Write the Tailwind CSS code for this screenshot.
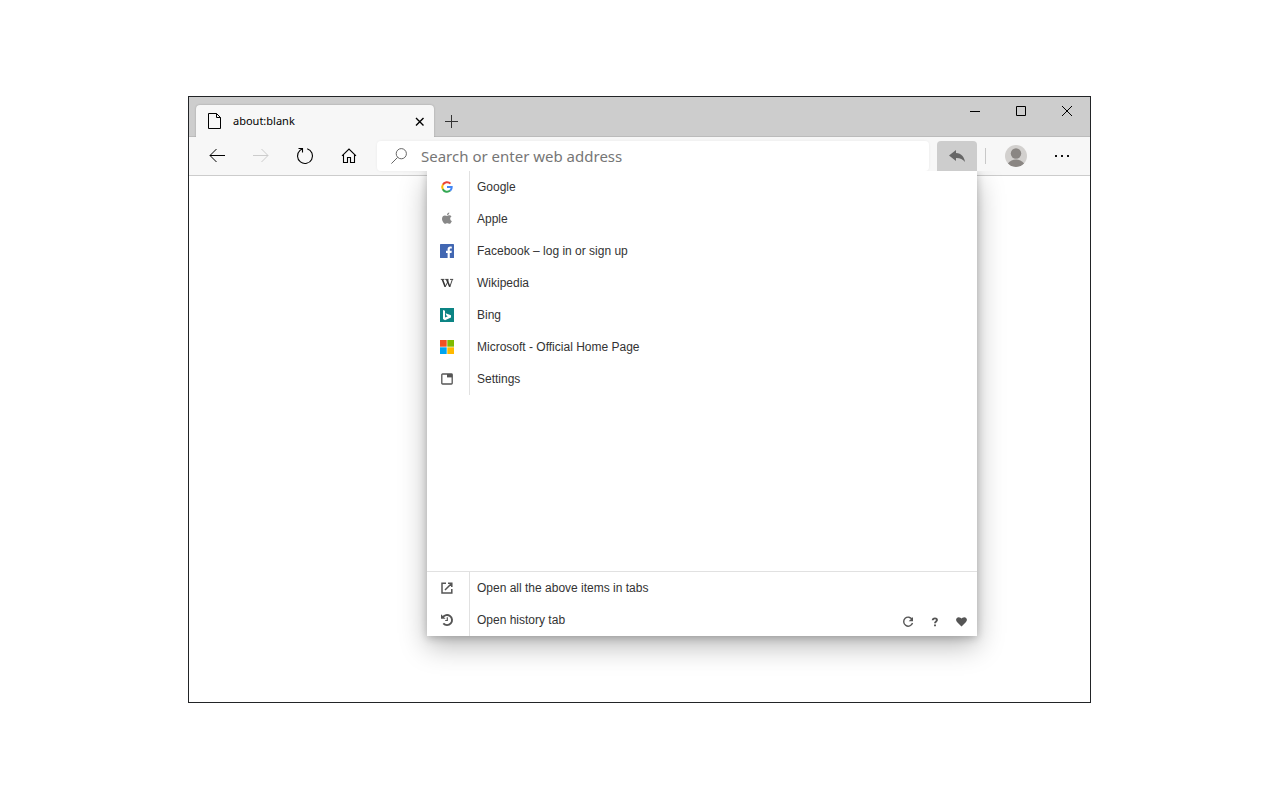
<!DOCTYPE html>
<html lang="en">
<head>
<meta charset="utf-8">
<meta name="viewport" content="width=device-width, initial-scale=1">
<title>about:blank</title>
<script src="https://cdn.jsdelivr.net/npm/@tailwindcss/browser@4"></script>
</head>
<body class="flex min-h-screen flex-col bg-white pt-24 pr-[189px] pb-[97px] pl-[188px] font-['Liberation_Sans',Arial,sans-serif] text-xs text-[#333]">
<main class="flex flex-1 flex-col border border-[#222427] bg-white">

  <!-- Title bar -->
  <header class="flex h-10 items-start bg-[#cdcdcd] pl-[7px] shadow-[inset_0_-1px_0_#bbb]">
    <div class="relative mt-2 flex h-8 w-[238px] items-center rounded-t bg-[#f7f7f7] pr-[9px] pl-3 shadow-[0_0_2px_rgba(0,0,0,0.25)] [clip-path:inset(-3px_-3px_0_-3px)]">
      <svg class="h-4 w-[13px]" viewBox="0 0 13 16" fill="none" stroke="#000" aria-hidden="true"><path d="M.5.5h8l4 4v11H.5zM8.500 .5v4h4"/></svg>
      <span class="ml-3 flex-1 font-['Noto_Sans',sans-serif] text-[11px] leading-4 text-black">about:blank</span>
      <button type="button" aria-label="Close tab" class="flex h-5 w-[11px] items-center justify-center"><svg class="size-[11px]" viewBox="0 0 11 11" stroke="#000" stroke-width="1.400" aria-hidden="true"><path d="M2 2l7.500 7.500M9.500 2L2 9.500"/></svg></button>
    </div>
    <button type="button" aria-label="New tab" class="mt-2 flex h-8 w-[35px] items-center justify-center"><svg class="size-[13px]" viewBox="0 0 13 13" stroke="#333" aria-hidden="true"><path d="M6.500 0v13M0 6.500h13"/></svg></button>
    <div class="ml-auto flex">
      <button type="button" aria-label="Minimize" class="flex h-7 w-[46px] items-center justify-center"><svg class="h-3 w-[10px]" viewBox="0 0 10 12" stroke="#000" aria-hidden="true"><path d="M0 6.500h10"/></svg></button>
      <button type="button" aria-label="Maximize" class="flex h-7 w-[46px] items-center justify-center"><svg class="size-[10px]" viewBox="0 0 10 10" fill="none" stroke="#000" aria-hidden="true"><path d="M.5.5h9v9h-9z"/></svg></button>
      <button type="button" aria-label="Close window" class="flex h-7 w-[46px] items-center justify-center"><svg class="size-[10px]" viewBox="0 0 10 10" stroke="#000" aria-hidden="true"><path d="M0 0l10 10M10 0L0 10"/></svg></button>
    </div>
  </header>

  <!-- Toolbar -->
  <div class="relative flex items-center border-b border-[#ccc] bg-[#f7f7f7] px-[6px] py-1">
    <button type="button" aria-label="Back" class="flex h-[30px] w-11 items-center justify-center"><svg class="size-4" viewBox="0 0 16 16" fill="none" stroke="#000" aria-hidden="true"><path d="M16 7.500H1M7.500 1L1 7.500 7.500 14"/></svg></button>
    <button type="button" aria-label="Forward" disabled class="flex h-[30px] w-11 items-center justify-center"><svg class="size-4" viewBox="0 0 16 16" fill="none" stroke="#ccc" aria-hidden="true"><path d="M0 7.500h15M8.500 1L15 7.500 8.500 14"/></svg></button>
    <button type="button" aria-label="Refresh" class="flex h-[30px] w-11 items-center justify-center"><svg class="size-[18px]" viewBox="0 0 18 18" fill="none" stroke="#000" stroke-width="1.100" aria-hidden="true"><path d="M11.200 1.800A7.500 7.500 0 1 1 4 3.400L6 2M2.500 1.500h4v4"/></svg></button>
    <button type="button" aria-label="Home" class="flex h-[30px] w-11 items-center justify-center"><svg class="size-4" viewBox="0 0 16 16" fill="none" stroke="#000" stroke-width="1.100" aria-hidden="true"><path d="M1 7.800L8 1l7 6.800M2.500 6.500v8h4v-5h3v5h4v-8"/></svg></button>
    <label class="ml-[6px] flex h-[30px] min-w-0 flex-1 items-center rounded bg-white pl-[14px] shadow-[0_0_3px_rgba(0,0,0,0.06)]">
      <svg class="size-4 shrink-0" viewBox="0 0 16 16" fill="none" stroke="#666" aria-hidden="true"><circle cx="10.300" cy="5.700" r="5.100"/><path d="M6.600 9.400L.4 15.600"/></svg>
      <input type="text" aria-label="Search or enter web address" placeholder="Search or enter web address" class="ml-[14px] h-[30px] min-w-0 flex-1 bg-transparent font-['Noto_Sans',sans-serif] text-[15px] text-[#767676] outline-none placeholder:text-[#767676]">
    </label>
    <button type="button" aria-label="Recent pages" class="ml-2 flex h-[30px] w-10 items-center justify-center rounded-t-sm bg-[#cdcdcd]"><svg class="h-3 w-4" viewBox="0 0 16 12" fill="#666" aria-hidden="true"><path d="M7 0v3.100c5.600.4 8.200 3.900 9 8.900-2.200-3.100-5-4.200-9-4.100V11L0 5.400z"/></svg></button>
    <div class="ml-2 h-4 w-px bg-[#c8c8c8]"></div>
    <button type="button" aria-label="Profile" class="ml-2 flex h-[30px] w-11 items-center justify-center"><svg class="size-[22px]" viewBox="0 0 22 22" aria-hidden="true"><defs><clipPath id="face"><circle cx="11" cy="11" r="11"/></clipPath></defs><g clip-path="url(#face)"><path fill="#d2d0ce" d="M0 0h22v22H0z"/><circle cx="11" cy="8.500" r="5.200" fill="#8a8683"/><path fill="#8a8683" d="M2.800 18.500C5 15.800 8 14.600 11 14.600s6 1.200 8.200 3.900C17 21 14 22 11 22s-6-1-8.200-3.500z"/></g></svg></button>
    <button type="button" aria-label="Settings and more" class="ml-[2px] flex h-[30px] w-11 items-center justify-center"><svg class="h-[2px] w-[14px]" viewBox="0 0 14 2" fill="#111" aria-hidden="true"><path d="M0 0h2v2H0zM6 0h2v2H6zM12 0h2v2h-2z"/></svg></button>

    <!-- Recent pages menu -->
    <nav aria-label="Recent pages" class="absolute top-[34px] right-[113px] flex min-h-[465px] w-[550px] flex-col bg-white shadow-[0_10px_26px_rgba(0,0,0,0.28),0_2px_8px_rgba(0,0,0,0.22)] [clip-path:inset(0_-60px_-60px_-60px)]">
      <ul class="flex-1">
        <li><a href="#" class="flex h-8 items-center"><span class="flex h-8 w-[43px] items-center border-r border-[#e1e1e1] pl-[13px]"><svg class="size-[14px]" viewBox="0 0 14 14" fill="none" stroke-width="2" aria-hidden="true"><path stroke="#ea4335" d="M2.800 4.800a4.700 4.700 0 0 1 7.700-1.100"/><path stroke="#fbbc05" d="M2.900 4.600a4.700 4.700 0 0 0 0 4.800"/><path stroke="#34a853" d="M2.800 9.200a4.700 4.700 0 0 0 7.300 1.400"/><path stroke="#4285f4" d="M7 7h4.700c.1 1.500-.4 2.700-1.500 3.700"/></svg></span><span class="pl-[7px]">Google</span></a></li>
        <li><a href="#" class="flex h-8 items-center"><span class="flex h-8 w-[43px] items-center border-r border-[#e1e1e1] pl-[13px]"><svg class="size-[14px]" viewBox="0 0 14 14" fill="#888" aria-hidden="true"><path d="M9.300 .6c.1 1.500-.9 2.600-2.300 2.600C6.900 1.800 8 .8 9.300.6zM7.200 3.900c.6 0 1.200-.6 2.200-.6.900 0 1.600.4 2.100 1.100-1.900 1.200-1.600 3.700.4 4.500-.6 1.500-1.500 2.900-2.500 2.900-.8 0-1.100-.5-2.100-.5s-1.300.5-2.100.5C3.800 11.800 2 9.100 2 6.800c0-2.200 1.400-3.400 2.900-3.400 1 0 1.700.5 2.300.5z"/></svg></span><span class="pl-[7px]">Apple</span></a></li>
        <li><a href="#" class="flex h-8 items-center"><span class="flex h-8 w-[43px] items-center border-r border-[#e1e1e1] pl-[13px]"><svg class="size-[14px]" viewBox="0 0 14 14" aria-hidden="true"><rect width="14" height="14" rx=".6" fill="#4267b2"/><path fill="#fff" d="M7.600 14V8.900H6V6.700h1.600V5.300c0-1.800 1.100-2.700 2.700-2.700.7 0 1.300.1 1.500.1v1.900h-1c-.9 0-1 .4-1 1v1.100h2l-.3 2.200H9.800V14z"/></svg></span><span class="pl-[7px]">Facebook – log in or sign up</span></a></li>
        <li><a href="#" class="flex h-8 items-center"><span class="flex h-8 w-[43px] items-center border-r border-[#e1e1e1] pl-[13px]"><svg class="size-[14px]" viewBox="0 0 14 14" fill="none" stroke="#333" aria-hidden="true"><path stroke-width=".9" d="M.8 3.400h3.600M5.200 3.400h3.400M10 3.400h3.200M5.200 10.900l3.200-6.400M9.800 10.900l2.500-7.300"/><path stroke-width="1.600" d="M2.400 3.500l2.800 7.200M6.700 3.500l3.100 7.200"/></svg></span><span class="pl-[7px]">Wikipedia</span></a></li>
        <li><a href="#" class="flex h-8 items-center"><span class="flex h-8 w-[43px] items-center border-r border-[#e1e1e1] pl-[13px]"><svg class="size-[14px]" viewBox="0 0 14 14" aria-hidden="true"><path fill="#0c8484" d="M0 0h14v14H0z"/><path fill="#fff" d="M3 2l2 .7v6.900l2.800-1.400-1.400-.8-.8-2.100 5.400 1.900v2.300L5 12.200l-2-1.200z"/></svg></span><span class="pl-[7px]">Bing</span></a></li>
        <li><a href="#" class="flex h-8 items-center"><span class="flex h-8 w-[43px] items-center border-r border-[#e1e1e1] pl-[13px]"><svg class="size-[14px]" viewBox="0 0 14 14" aria-hidden="true"><path fill="#f25022" d="M0 0h6.700v6.700H0z"/><path fill="#7fba00" d="M7.300 0H14v6.700H7.300z"/><path fill="#00a4ef" d="M0 7.300h6.700V14H0z"/><path fill="#ffb900" d="M7.300 7.300H14V14H7.300z"/></svg></span><span class="pl-[7px]">Microsoft - Official Home Page</span></a></li>
        <li><a href="#" class="flex h-8 items-center"><span class="flex h-8 w-[43px] items-center border-r border-[#e1e1e1] pl-[13px]"><svg class="size-[14px]" viewBox="0 0 14 14" aria-hidden="true"><rect x="1.800" y="2" width="10.400" height="10" rx=".8" fill="none" stroke="#555" stroke-width="1.300"/><path fill="#555" d="M7 2h5.200v3.400H7z"/></svg></span><span class="pl-[7px]">Settings</span></a></li>
      </ul>
      <div class="flex border-t border-[#e1e1e1]">
        <ul class="flex-1">
          <li><a href="#" class="flex h-8 items-center"><span class="flex h-8 w-[43px] items-center border-r border-[#e1e1e1] pl-[13px]"><svg class="size-[14px]" viewBox="0 0 14 14" fill="none" stroke="#555" stroke-width="1.500" aria-hidden="true"><path d="M6 2.200H2v9.800h9.800V8M8 2.200h3.800V6M11.800 2.200L5 9"/></svg></span><span class="pl-[7px]">Open all the above items in tabs</span></a></li>
          <li><a href="#" class="flex h-8 items-center"><span class="flex h-8 w-[43px] items-center border-r border-[#e1e1e1] pl-[13px]"><svg class="size-[14px]" viewBox="0 0 14 14" fill="none" stroke="#555" aria-hidden="true"><path stroke-width="1.900" d="M2.700 4.600a5 5 0 1 1 .6 5.800"/><path fill="#555" stroke="none" d="M1 1.200L5.600 5.800H1z"/><path stroke-width="1.200" d="M7.300 4.200v3.300H5.200"/></svg></span><span class="pl-[7px]">Open history tab</span></a></li>
        </ul>
        <div class="flex items-end pr-[2px] pb-1">
          <button type="button" aria-label="Reload" class="flex h-5 w-[27px] items-center justify-center"><svg class="size-3" viewBox="0 0 12 12" fill="none" stroke="#555" stroke-width="1.400" aria-hidden="true"><path d="M10.200 3.600A4.500 4.500 0 1 0 10.500 7"/><path fill="#555" stroke="none" d="M11 .9v4.300H6.700z"/></svg></button>
          <button type="button" aria-label="Help" class="flex h-5 w-[27px] items-center justify-center"><svg class="size-[10px]" viewBox="0 0 10 10" fill="none" stroke="#555" stroke-width="1.900" aria-hidden="true"><path d="M2.700 3.300C2.900 .7 7.100 .8 7 3.100 7 4.500 5 4.500 5 6.300M5 7.400v1.900"/></svg></button>
          <button type="button" aria-label="Donate" class="flex h-5 w-[27px] items-center justify-center"><svg class="h-[10px] w-3" viewBox="0 0 12 10" fill="#555" aria-hidden="true"><path d="M5.500 9.500L1 5C-1.500 2.300 1.500-1.200 4.500.7l1 .9 1-.9C9.500-1.200 12.500 2.300 10 5z"/></svg></button>
        </div>
      </div>
    </nav>
  </div>
</main>
</body>
</html>
